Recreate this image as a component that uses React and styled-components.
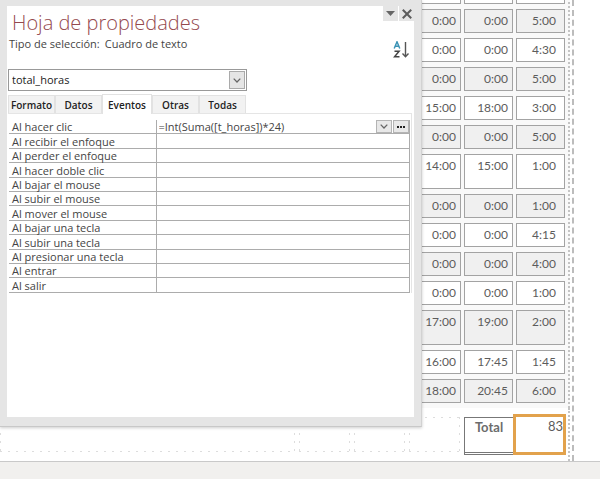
import styled, { createGlobalStyle } from "styled-components"
import { useState } from "react"

const uiFont = `"Open Sans", "Noto Sans", sans-serif`
const reportFont = `Lato, "Liberation Sans", sans-serif`

const rows = [
    { times: ["", "", ""] },
    { times: ["0:00", "0:00", "5:00"] },
    { times: ["0:00", "0:00", "4:30"] },
    { times: ["0:00", "0:00", "5:00"] },
    { times: ["15:00", "18:00", "3:00"] },
    { times: ["0:00", "0:00", "5:00"] },
    { times: ["14:00", "15:00", "1:00"], tall: true },
    { times: ["0:00", "0:00", "1:00"] },
    { times: ["0:00", "0:00", "4:15"] },
    { times: ["0:00", "0:00", "4:00"] },
    { times: ["0:00", "0:00", "1:00"] },
    { times: ["17:00", "19:00", "2:00"], tall: true },
    { times: ["16:00", "17:45", "1:45"] },
    { times: ["18:00", "20:45", "6:00"] },
]

const events = [
    "Al hacer clic",
    "Al recibir el enfoque",
    "Al perder el enfoque",
    "Al hacer doble clic",
    "Al bajar el mouse",
    "Al subir el mouse",
    "Al mover el mouse",
    "Al bajar una tecla",
    "Al subir una tecla",
    "Al presionar una tecla",
    "Al entrar",
    "Al salir",
]

const tabs = ["Formato", "Datos", "Eventos", "Otras", "Todas"]

function Report() {
    return (
        <Sheet>
            <Detail>
                <tbody>
                    {rows.map((row, i) => (
                        <tr key={i}>
                            {row.times.map((time, j) => (
                                <TimeCell key={j} $tall={row.tall} $shaded={i % 2 === 1} $last={j === 2}>{time}</TimeCell>
                            ))}
                        </tr>
                    ))}
                </tbody>
            </Detail>
            <ReportFooter>
                <EmptyCell $grow />
                <EmptyCell />
                <EmptyCell />
                <EmptyCell />
                <TotalLabel>Total</TotalLabel>
                <TotalValue>83</TotalValue>
            </ReportFooter>
        </Sheet>
    )
}

function PropertySheet() {
    const [tab, setTab] = useState("Eventos")
    return (
        <Panel aria-label="Hoja de propiedades">
            <PanelBody>
                <Heading>
                    <Title>Hoja de propiedades</Title>
                    <WindowButton aria-label="Opciones">
                        <svg width="9" height="5" viewBox="0 0 9 5"><path d="M0 0h9L4.500 5z" fill="#666" /></svg>
                    </WindowButton>
                    <WindowButton aria-label="Cerrar">
                        <svg width="10" height="10" viewBox="0 0 9 9"><path d="M.7.7l7.600 7.600M8.300.7L.7 8.300" stroke="#5c5c5c" strokeWidth="1.800" /></svg>
                    </WindowButton>
                </Heading>
                <Selection>
                    <Kind>Tipo de selección:<span>Cuadro de texto</span></Kind>
                    <SortButton aria-label="Ordenar">
                        <svg width="17" height="18" viewBox="0 0 17 18" fill="none">
                            <path d="M1.200 7.500L4 .8l2.800 6.700M2.200 5.300h3.600" stroke="#3b93b5" strokeWidth="1.500" />
                            <path d="M1.500 10.200h4.600L1.500 15.800h5" stroke="#444" strokeWidth="1.500" />
                            <path d="M12.500 1v14.500M9.500 12.500l3 3.200 3-3.200" stroke="#555" strokeWidth="1.400" />
                        </svg>
                    </SortButton>
                </Selection>
                <Combo>
                    <ComboSelect aria-label="Control" defaultValue="total_horas">
                        <option>total_horas</option>
                    </ComboSelect>
                    <ComboArrow><Chevron /></ComboArrow>
                </Combo>
                <Tabs role="tablist">
                    {tabs.map((name) => (
                        <Tab key={name} role="tab" aria-selected={tab === name} $active={tab === name} onClick={() => setTab(name)}>{name}</Tab>
                    ))}
                </Tabs>
                <TabPage>
                    <Events>
                        <tbody>
                            {events.map((name, i) => (
                                <tr key={name}>
                                    <EventName scope="row">{name}</EventName>
                                    <EventValue>
                                        {i === 0 && (
                                            <Editor>
                                                <Expression aria-label={name} defaultValue="=Int(Suma([t_horas])*24)" />
                                                <CellButton aria-label="Elegir"><Chevron /></CellButton>
                                                <CellButton aria-label="Generar">
                                                    <svg width="8" height="2" viewBox="0 0 8 2"><path d="M0 0h2v2H0zM3 0h2v2H3zM6 0h2v2H6z" fill="#222" /></svg>
                                                </CellButton>
                                            </Editor>
                                        )}
                                    </EventValue>
                                </tr>
                            ))}
                        </tbody>
                    </Events>
                </TabPage>
            </PanelBody>
        </Panel>
    )
}

function Chevron() {
    return <svg width="8" height="5" viewBox="0 0 8 5"><path d="M.7.6L4 4 7.300.6" fill="none" stroke="#666" strokeWidth="1.300" /></svg>
}

export default function App() {
    return (
        <>
            <GlobalStyle />
            <Page>
                <Report />
                <PropertySheet />
                <StatusBar />
            </Page>
        </>
    )
}

const GlobalStyle = createGlobalStyle`
    * {
        box-sizing: border-box;
    }
    body {
        margin: 0;
        background: #ffffff;
    }
    button, input, select {
        font: inherit;
        color: inherit;
        margin: 0;
        padding: 0;
        border: 0;
        border-radius: 0;
    }
`
const Page = styled.main`
    position: relative;
    min-height: 100vh;
    display: flex;
    flex-direction: column;
    overflow: hidden;
    font-family: ${uiFont};
    font-size: 11px;
    color: #444444;
`
const Sheet = styled.section`
    display: flex;
    flex-direction: column;
    align-items: flex-end;
    margin-right: 26px;
    padding-right: 2px;
    border-right: 2px dashed #bcbcbc;
    font-family: ${reportFont};
    font-size: 12px;
    color: #5c5c5c;
`
const Detail = styled.table`
    margin-top: -25px;
    border-right: 2px dotted #c4c4c4;
    border-collapse: separate;
    border-spacing: 3px 5px;
    background: #f9f9f9;
`
const TimeCell = styled.td`
    width: 49px;
    height: ${(props) => (props.$tall ? 35 : 24)}px;
    padding: 3px ${(props) => (props.$last ? 8 : 4)}px 0 0;
    border: 1px solid #a3a3a3;
    background: ${(props) => (props.$shaded ? "#f0f0f0" : "#ffffff")};
    line-height: 15px;
    text-align: right;
    vertical-align: top;
`
const ReportFooter = styled.div`
    align-self: stretch;
    display: flex;
    align-items: flex-start;
    gap: 4px;
    padding: 9px 2px 6px 0;
    border-right: 2px dotted #c4c4c4;
`
const EmptyCell = styled.div`
    flex: ${(props) => (props.$grow ? "1" : "0 0 51px")};
    height: 35px;
    background:
        repeating-linear-gradient(90deg, #dddddd 0 2px, transparent 2px 8px) top / 100% 1px no-repeat,
        repeating-linear-gradient(90deg, #dddddd 0 2px, transparent 2px 8px) bottom / 100% 1px no-repeat,
        repeating-linear-gradient(#dddddd 0 2px, transparent 2px 8px) left / 1px 100% no-repeat,
        repeating-linear-gradient(#dddddd 0 2px, transparent 2px 8px) right / 1px 100% no-repeat;
`
const TotalLabel = styled.div`
    width: 50px;
    height: 38px;
    padding-top: 1px;
    border: 1px solid #777777;
    border-bottom: 3px double #777777;
    font-size: 13px;
    font-weight: 700;
    line-height: 16px;
    text-align: center;
    color: #6c6c6c;
`
const TotalValue = styled.output`
    width: 53px;
    height: 41px;
    margin: -3px 0 0 -5px;
    border: 3px solid #e2a24c;
    background: #ffffff;
    font-size: 13px;
    line-height: 18px;
    text-align: right;
`
const StatusBar = styled.footer`
    flex: 1;
    border-top: 1px solid #c9c9c9;
    background: #f1f0ee;
`
/* floating window, lies over the report */
const Panel = styled.aside`
    position: absolute;
    top: 0;
    left: 0;
    width: 422px;
    padding: 6px 7px 9px;
    background: #e5e5e5;
    border-bottom: 1px solid #c8c8c8;
    border-right: 1px solid #d2d2d2;
    box-shadow: 0 1px 3px rgba(0, 0, 0, 0.2);
`
const PanelBody = styled.div`
    min-height: 411px;
    background: #ffffff;
`
const Heading = styled.header`
    display: flex;
    align-items: flex-start;
    gap: 1px;
    height: 28px;
`
const Title = styled.h1`
    flex: 1;
    margin: 0;
    padding: 3px 0 0 5px;
    font-size: 20px;
    font-weight: 300;
    line-height: 28px;
    color: #94494e;
`
const WindowButton = styled.button`
    display: flex;
    align-items: center;
    justify-content: center;
    width: 15px;
    height: 15px;
    background: #e5e5e5;
`
const Selection = styled.div`
    display: flex;
    justify-content: space-between;
    height: 35px;
    padding: 0 4px 0 2px;
`
const Kind = styled.p`
    margin: 0;
    padding-top: 2px;
    line-height: 16px;

    span {
        margin-left: 5px;
    }
`
const SortButton = styled.button`
    align-self: flex-start;
    margin-top: 7px;
    height: 18px;
    background: none;
`
const Combo = styled.div`
    display: flex;
    align-items: center;
    width: 239px;
    height: 22px;
    margin-left: 1px;
    padding: 1px;
    border: 1px solid #999999;
    color: #222222;
`
const ComboSelect = styled.select`
    flex: 1;
    padding: 0 0 2px 2px;
    appearance: none;
    background: none;
`
const ComboArrow = styled.span`
    display: flex;
    align-items: center;
    justify-content: center;
    width: 16px;
    height: 18px;
    border: 1px solid #aaaaaa;
    background: #e5e5e5;
`
const Tabs = styled.div`
    display: flex;
    align-items: flex-end;
    height: 23px;
    margin: 0 2px 0 1px;
    border-bottom: 1px solid #e5e5e5;
`
const Tab = styled.button`
    width: ${(props) => (props.$active ? 50 : 47)}px;
    height: ${(props) => (props.$active ? 20 : 18)}px;
    margin-bottom: ${(props) => (props.$active ? -1 : 0)}px;
    border: 1px solid #e2e2e2;
    border-bottom: 0;
    background: ${(props) => (props.$active ? "#ffffff" : "#f2f2f2")};
    font-size: 10px;
    font-weight: 600;
    color: #222222;
`
const TabPage = styled.div`
    margin-right: 2px;
    padding: 6px 1px 0 2px;
    border-right: 1px solid #e5e5e5;
`
const Events = styled.table`
    width: 100%;
    height: 173px;
    border-collapse: collapse;
    table-layout: fixed;
    line-height: 12px;
`
const EventName = styled.th`
    width: 147px;
    padding: 1px 0 0 3px;
    border: solid #acacac;
    border-width: 0 1px 1px 0;
    font-weight: 400;
    text-align: left;
    vertical-align: bottom;
    white-space: nowrap;
`
const EventValue = styled.td`
    padding: 0;
    border: solid #acacac;
    border-width: 0 1px 1px 0;
`
const Editor = styled.div`
    display: flex;
    gap: 1px;
    height: 13px;
`
const Expression = styled.input`
    flex: 1;
    min-width: 0;
    padding: 1px 0 0 2px;
    background: none;
`
const CellButton = styled.button`
    display: flex;
    align-items: center;
    justify-content: center;
    width: 16px;
    border: 1px solid #b4b4b4;
    background: #e8e8e8;
`
